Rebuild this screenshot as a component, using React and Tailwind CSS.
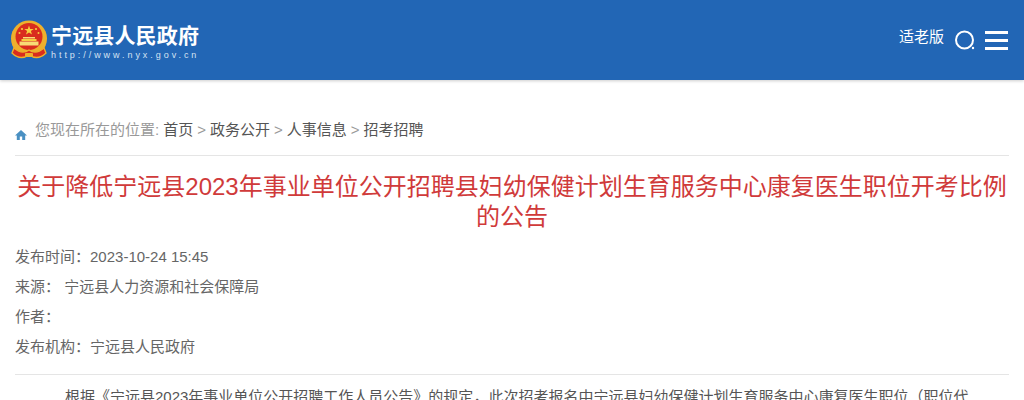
import React from "react";

const Emblem = () => (
  <svg width="38" height="40" viewBox="0 0 38 40">
    <circle cx="19" cy="18.5" r="18" fill="#eeb02c" />
    <circle cx="19" cy="16.5" r="13.5" fill="#d92c1e" />
    <polygon points="19,5.5 20.2,9 23.8,9 20.9,11.1 22,14.5 19,12.4 16,14.5 17.1,11.1 14.2,9 17.8,9" fill="#f7cf3f" />
    <circle cx="12" cy="9" r="1.1" fill="#f7cf3f" />
    <circle cx="26" cy="9" r="1.1" fill="#f7cf3f" />
    <circle cx="9.5" cy="13" r="1" fill="#f7cf3f" />
    <circle cx="28.5" cy="13" r="1" fill="#f7cf3f" />
    <rect x="13" y="17" width="12" height="1.5" fill="#f7dc75" />
    <rect x="11.5" y="19" width="15" height="2" fill="#f7cf3f" />
    <rect x="9.5" y="21.5" width="19" height="4" fill="#f7dc75" />
    <path d="M4 28 Q12 35 19 30 Q26 35 34 28 L36 33 Q28 41 19 35 Q10 41 2 33 Z" fill="#d92c1e" stroke="#eeb02c" strokeWidth="1.4" />
    <rect x="15" y="33" width="8" height="4" rx="1" fill="#eeb02c" />
  </svg>
);

const Head = () => (
  <div className="h-20 bg-[#2266b5] flex items-center justify-between pl-[10px] pr-[16px] shadow-[0_1px_3px_rgba(0,0,0,0.2)]">
    <div className="flex items-center gap-[3px]">
      <Emblem />
      <div className="text-white mt-[4px]">
        <div className="text-[21px] leading-[26px] font-bold tracking-[0.15px]">宁远县人民政府</div>
        <div className="text-[9px] leading-[12px] tracking-[2.95px] text-[#d5e3f3]">http://www.nyx.gov.cn</div>
      </div>
    </div>
    <div className="flex items-center text-white">
      <span className="text-[15px] mr-[10px] mt-[-6px]">适老版</span>
      <svg width="22" height="22" viewBox="0 0 22 22" className="mr-[9px]">
        <circle cx="10.5" cy="11" r="8.5" fill="none" stroke="#fff" strokeWidth="2" />
        <circle cx="19" cy="19" r="1.2" fill="#fff" />
      </svg>
      <div className="flex flex-col gap-[5px] w-[23px]">
        <div className="h-[3px] bg-white" />
        <div className="h-[3px] bg-white" />
        <div className="h-[3px] bg-white" />
      </div>
    </div>
  </div>
);

const Crumbs = () => (
  <div className="flex items-center h-[76px] pt-[26px] border-b border-[#e5e5e5] text-[15px] text-[#555]">
    <svg width="12" height="12" viewBox="0 0 12 12" className="mr-[8px] mt-[8px]" fill="#4a90c2">
      <path d="M6 1 L12 6.5 H10.2 V11 H7.2 V7.5 H4.8 V11 H1.8 V6.5 H0 Z" />
    </svg>
    <span className="text-[#999]">您现在所在的位置:</span>
    <span className="ml-1">首页</span>
    <span className="text-[#999] mx-1">&gt;</span>
    <span>政务公开</span>
    <span className="text-[#999] mx-1">&gt;</span>
    <span>人事信息</span>
    <span className="text-[#999] mx-1">&gt;</span>
    <span>招考招聘</span>
  </div>
);

export default function App() {
  return (
    <div className="h-[400px] overflow-hidden bg-white font-['Liberation_Sans','Noto_Sans_CJK_SC',sans-serif]">
      <Head />
      <div className="px-[15px]">
        <Crumbs />
        <h1 className="mt-[16px] text-center text-[24px] leading-[30px] font-normal text-[#d03a3a]">
          关于降低宁远县2023年事业单位公开招聘县妇幼保健计划生育服务中心康复医生职位开考比例的公告
        </h1>
        <div className="mt-[10px] pb-[12px] border-b border-[#e5e5e5] text-[15px] text-[#666]">
          <div className="h-[30px] leading-[30px]">发布时间{"\uFF1A"}2023-10-24 15:45</div>
          <div className="h-[30px] leading-[30px]">来源{"\uFF1A"} 宁远县人力资源和社会保障局</div>
          <div className="h-[30px] leading-[30px]">作者{"\uFF1A"}</div>
          <div className="h-[30px] leading-[30px]">发布机构{"\uFF1A"}宁远县人民政府</div>
        </div>
        <p className="mt-[10px] text-[15px] leading-[24px] text-[#555] indent-[50px]">
          根据《宁远县2023年事业单位公开招聘工作人员公告》的规定{"\uFF0C"}此次招考报名中宁远县妇幼保健计划生育服务中心康复医生职位{"\uFF08"}职位代
        </p>
      </div>
    </div>
  );
}
